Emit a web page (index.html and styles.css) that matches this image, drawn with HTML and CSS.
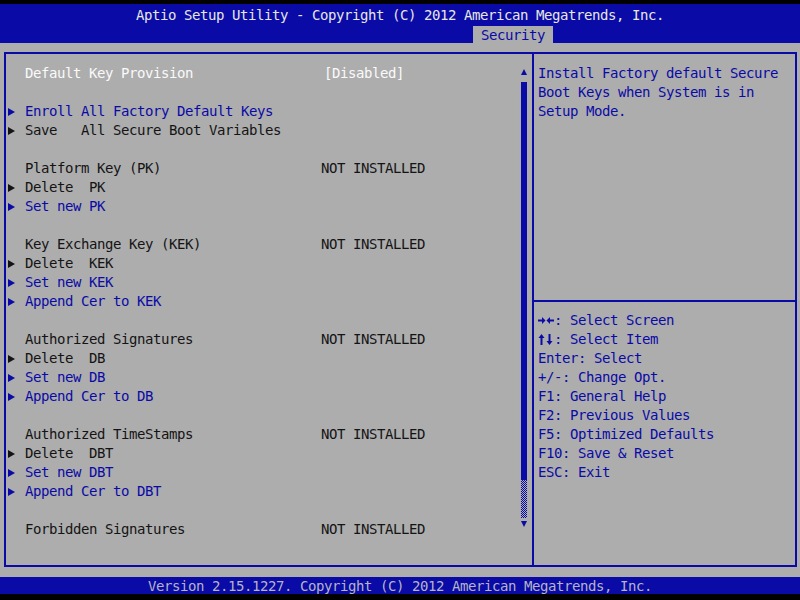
FILE: index.html
```html
<!DOCTYPE html>
<html lang="en">
<head>
    <meta charset="UTF-8">
    <title>Aptio Setup Utility - Security</title>
    <link rel="stylesheet" href="styles.css">
</head>
<body>
    <div class="screen">
        <header class="top">
            <div class="title">Aptio Setup Utility - Copyright (C) 2012 American Megatrends, Inc.</div>
            <div class="tabs"><span class="tab">Security</span></div>
        </header>
        <main class="body">
            <div class="frame">
                <section class="menu">
                    <ul class="items">
                        <li class="row white"><span class="tri"></span><span class="label">Default Key Provision</span><span class="value shift">[Disabled]</span></li>
                        <li class="row"></li>
                        <li class="row link"><span class="tri on"></span><span class="label">Enroll All Factory Default Keys</span></li>
                        <li class="row"><span class="tri on"></span><span class="label">Save   All Secure Boot Variables</span></li>
                        <li class="row"></li>
                        <li class="row"><span class="tri"></span><span class="label">Platform Key (PK)</span><span class="value">NOT INSTALLED</span></li>
                        <li class="row"><span class="tri on"></span><span class="label">Delete  PK</span></li>
                        <li class="row link"><span class="tri on"></span><span class="label">Set new PK</span></li>
                        <li class="row"></li>
                        <li class="row"><span class="tri"></span><span class="label">Key Exchange Key (KEK)</span><span class="value">NOT INSTALLED</span></li>
                        <li class="row"><span class="tri on"></span><span class="label">Delete  KEK</span></li>
                        <li class="row link"><span class="tri on"></span><span class="label">Set new KEK</span></li>
                        <li class="row link"><span class="tri on"></span><span class="label">Append Cer to KEK</span></li>
                        <li class="row"></li>
                        <li class="row"><span class="tri"></span><span class="label">Authorized Signatures</span><span class="value">NOT INSTALLED</span></li>
                        <li class="row"><span class="tri on"></span><span class="label">Delete  DB</span></li>
                        <li class="row link"><span class="tri on"></span><span class="label">Set new DB</span></li>
                        <li class="row link"><span class="tri on"></span><span class="label">Append Cer to DB</span></li>
                        <li class="row"></li>
                        <li class="row"><span class="tri"></span><span class="label">Authorized TimeStamps</span><span class="value">NOT INSTALLED</span></li>
                        <li class="row"><span class="tri on"></span><span class="label">Delete  DBT</span></li>
                        <li class="row link"><span class="tri on"></span><span class="label">Set new DBT</span></li>
                        <li class="row link"><span class="tri on"></span><span class="label">Append Cer to DBT</span></li>
                        <li class="row"></li>
                        <li class="row"><span class="tri"></span><span class="label">Forbidden Signatures</span><span class="value">NOT INSTALLED</span></li>
                    </ul>
                    <div class="scroll">
                        <span class="arrow up"></span>
                        <span class="thumb"></span>
                        <span class="track"></span>
                        <span class="arrow down"></span>
                    </div>
                </section>
                <aside class="help">
                    <div class="help-text">Install Factory default Secure<br>Boot Keys when System is in<br>Setup Mode.</div>
                    <ul class="keys">
                        <li><svg class="key-icon" width="16" height="19" viewBox="0 0 16 19"><path d="M0 9.5H5" stroke="currentColor" stroke-width="2"/><path d="M4 6L7.5 9.5L4 13Z" fill="currentColor"/><path d="M16 9.5H11" stroke="currentColor" stroke-width="2"/><path d="M12 6L8.5 9.5L12 13Z" fill="currentColor"/></svg>: Select Screen</li>
                        <li><svg class="key-icon" width="16" height="19" viewBox="0 0 16 19"><path d="M3.5 8V15" stroke="currentColor" stroke-width="2"/><path d="M0.5 8L3.5 4L6.5 8Z" fill="currentColor"/><path d="M11.5 4V11" stroke="currentColor" stroke-width="2"/><path d="M8.5 11L11.5 15L14.5 11Z" fill="currentColor"/></svg>: Select Item</li>
                        <li>Enter: Select</li>
                        <li>+/-: Change Opt.</li>
                        <li>F1: General Help</li>
                        <li>F2: Previous Values</li>
                        <li>F5: Optimized Defaults</li>
                        <li>F10: Save &amp; Reset</li>
                        <li>ESC: Exit</li>
                    </ul>
                </aside>
            </div>
        </main>
        <footer class="bottom">Version 2.15.1227. Copyright (C) 2012 American Megatrends, Inc.</footer>
    </div>
</body>
</html>
```

FILE: styles.css
```css
body {
    margin: 0;
    padding: 0;
    background: #000;
    font-family: "DejaVu Sans Mono", "Liberation Mono", monospace;
    font-size: 14px;
    letter-spacing: -0.43px;
}
.screen {
    width: 800px;
    height: 600px;
    display: flex;
    flex-direction: column;
    padding-top: 4px;
    box-sizing: border-box;
}
.top {
    height: 39px;
    background: #0a0aa6;
    display: flex;
    flex-direction: column;
}
.title {
    height: 22px;
    line-height: 23px;
    text-align: center;
    color: #e6e6e6;
}
.tabs {
    display: flex;
    padding-left: 473px;
}
.tab {
    height: 17px;
    line-height: 18px;
    padding: 0 8px 0 8px;
    background: #adadad;
    color: #0a0aa6;
}
.body {
    height: 534px;
    background: #adadad;
    padding: 9px 3px 10px 4px;
    box-sizing: border-box;
}
.frame {
    height: 100%;
    border: 2px solid #0a0aa6;
    box-sizing: border-box;
    display: flex;
}
.menu {
    width: 526px;
    display: flex;
}
.items {
    flex: 1;
    list-style: none;
    margin: 0;
    padding: 10px 0 0 2px;
}
.row {
    height: 19px;
    line-height: 19px;
    display: flex;
    align-items: center;
    white-space: pre;
    color: #141414;
}
.row.white {
    color: #fafafa;
}
.row.link {
    color: #0a0aa6;
}
.tri {
    width: 17px;
    height: 19px;
    flex-shrink: 0;
    display: flex;
    align-items: center;
}
.tri.on::before {
    content: "";
    border-left: 7px solid currentColor;
    border-top: 4.5px solid transparent;
    border-bottom: 4.5px solid transparent;
}
.label {
    width: 296px;
}
.value.shift {
    padding-left: 3px;
}
.scroll {
    width: 6px;
    margin-right: 5px;
    padding-top: 14px;
    display: flex;
    flex-direction: column;
}
.arrow {
    height: 8px;
    display: flex;
    align-items: center;
    justify-content: center;
}
.arrow.up::before {
    content: "";
    border-bottom: 6px solid #0a0aa6;
    border-left: 3px solid transparent;
    border-right: 3px solid transparent;
}
.arrow.down {
    margin-top: 2px;
}
.arrow.down::before {
    content: "";
    border-top: 6px solid #0a0aa6;
    border-left: 3px solid transparent;
    border-right: 3px solid transparent;
}
.thumb {
    margin-top: 6px;
    height: 398px;
    background: #0a0aa6;
}
.track {
    height: 38px;
    background: repeating-conic-gradient(#0a0aa6 0 25%, transparent 0 50%) 0 0 / 2px 2px;
}
.help {
    flex: 1;
    border-left: 2px solid #0a0aa6;
    display: flex;
    flex-direction: column;
    color: #0a0aa6;
}
.help-text {
    height: 248px;
    box-sizing: border-box;
    padding: 10px 0 0 4px;
    line-height: 19px;
    border-bottom: 2px solid #0a0aa6;
}
.keys {
    list-style: none;
    margin: 0;
    padding: 9px 0 0 4px;
    line-height: 19px;
}
.keys li {
    height: 19px;
    display: flex;
    align-items: center;
    white-space: pre;
}
.key-icon {
    flex-shrink: 0;
}
.bottom {
    height: 17px;
    line-height: 18px;
    background: #0a0aa6;
    color: #b4b4c4;
    text-align: center;
}
```
